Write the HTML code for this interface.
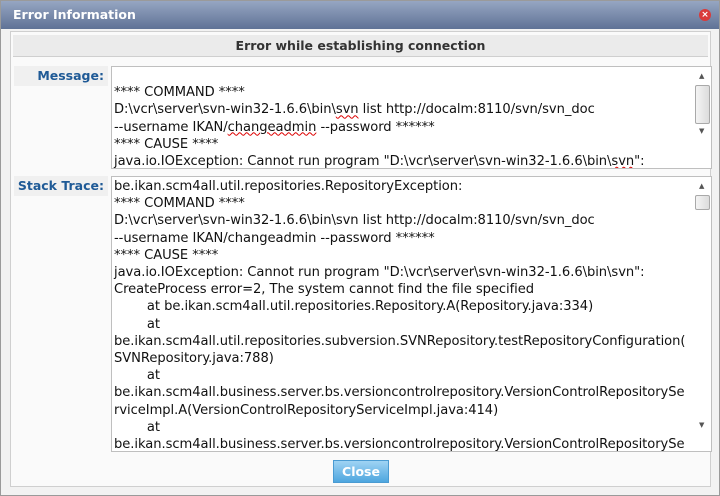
<!DOCTYPE html>
<html><head><style>
*{margin:0;padding:0;box-sizing:border-box}
body{width:720px;height:496px;background:#d4d4d4;font-family:"DejaVu Sans","Liberation Sans",sans-serif;position:relative;overflow:hidden}
.win{position:absolute;left:0;top:0;width:720px;height:496px;background:#f2f2f2;border:1px solid #9a9a9a}
.title{position:absolute;left:0;top:0;width:718px;height:28px;background:linear-gradient(#96a6c2,#5f7296);color:#fff;font-weight:bold;font-size:12.5px;line-height:28px;padding-left:12px}
.x{position:absolute;right:8px;top:8px;width:12px;height:12px;border-radius:50%;background:#d93a3a;color:#fff;font-size:9px;line-height:12px;text-align:center;font-weight:bold}
.panel{position:absolute;left:9px;top:30px;width:701px;height:456px;background:#fafafa;border:1px solid #cfcfcf}
.hdr{position:absolute;left:2px;top:3px;width:695px;height:22px;background:#ebebeb;border-bottom:1px solid #cfcfcf;text-align:center;font-weight:bold;font-size:12.5px;line-height:22px;color:#333}
.lab{position:absolute;left:3px;width:94px;background:#f0f0f0;color:#1f5a96;font-weight:bold;font-size:12.5px;text-align:right;padding-right:4px;height:20px;line-height:20px}
.ta{position:absolute;left:100px;width:601px;background:#fff;border:1px solid #bfbfbf;font-size:13.1px;line-height:17.2px;color:#111;white-space:pre;overflow:hidden;padding:1px 0 0 2px;letter-spacing:-0.05px}
.sb{position:absolute;right:0;top:0;width:17px;bottom:0;background:#fff}
.thumb{position:absolute;left:1px;width:15px;background:linear-gradient(90deg,#f4f4f4,#dcdcdc);border:1px solid #a9a9a9;border-radius:2px}
.btn{position:absolute;left:322px;top:428px;width:56px;height:23px;background:linear-gradient(#9fd3f4,#4ea6df);border:1px solid #4a9bd2;color:#fff;font-weight:bold;font-size:12.5px;text-align:center;line-height:21px}
u{text-decoration:underline wavy #d00;text-decoration-thickness:1px}
</style></head><body>
<div class="win">
<div class="title">Error Information<div class="x">×</div></div>
<div class="panel">
<div class="hdr">Error while establishing connection</div>
<div class="lab" style="top:34px">Message:</div>
<div class="ta" style="top:34px;height:103px;padding-top:0">
**** COMMAND ****
D:\vcr\server\svn-win32-1.6.6\bin\<u>svn</u> list http://docalm:8110/svn/svn_doc
--username IKAN/<u>changeadmin</u> --password ******
**** CAUSE ****
java.io.IOException: Cannot run program "D:\vcr\server\svn-win32-1.6.6\bin\<u>svn</u>":<div class="sb"><div style="position:absolute;top:6px;left:5px;font-size:7px;line-height:7px;color:#555">▲</div><div class="thumb" style="top:18px;height:39px"></div><div style="position:absolute;top:56px;left:5px;font-size:7px;color:#555">▼</div></div></div>
<div class="lab" style="top:144px">Stack Trace:</div>
<div class="ta" style="top:144px;height:276px">be.ikan.scm4all.util.repositories.RepositoryException:
**** COMMAND ****
D:\vcr\server\svn-win32-1.6.6\bin\svn list http://docalm:8110/svn/svn_doc
--username IKAN/changeadmin --password ******
**** CAUSE ****
java.io.IOException: Cannot run program "D:\vcr\server\svn-win32-1.6.6\bin\svn":
CreateProcess error=2, The system cannot find the file specified
        at be.ikan.scm4all.util.repositories.Repository.A(Repository.java:334)
        at
be.ikan.scm4all.util.repositories.subversion.SVNRepository.testRepositoryConfiguration(
SVNRepository.java:788)
        at
be.ikan.scm4all.business.server.bs.versioncontrolrepository.VersionControlRepositorySe
rviceImpl.A(VersionControlRepositoryServiceImpl.java:414)
        at
be.ikan.scm4all.business.server.bs.versioncontrolrepository.VersionControlRepositorySe<div class="sb"><div style="position:absolute;top:6px;left:5px;font-size:7px;line-height:7px;color:#555">▲</div><div class="thumb" style="top:18px;height:15px"></div><div style="position:absolute;top:240px;left:5px;font-size:7px;color:#555">▼</div></div></div>
<div class="btn">Close</div>
</div>
</div>
</body></html>
